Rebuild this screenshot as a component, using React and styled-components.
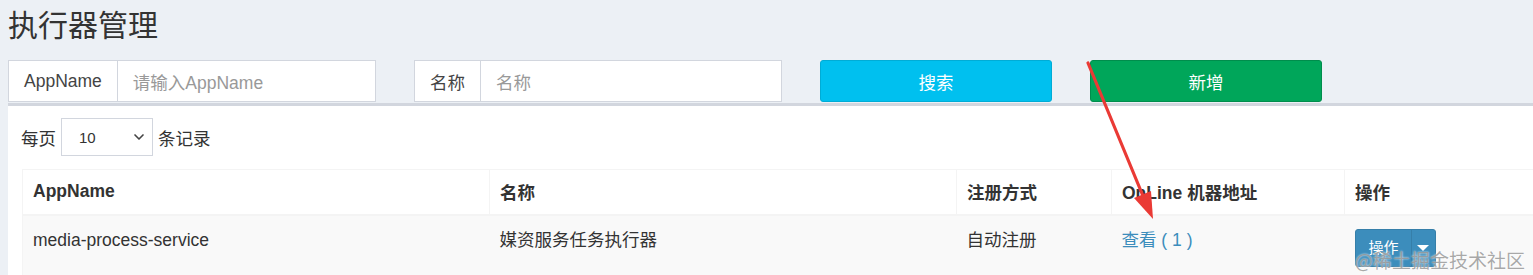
import { styled, createGlobalStyle } from "styled-components";
import { ChevronDown } from "lucide-react";

const GlobalStyle = createGlobalStyle`
  body {
    margin: 0;
    background: #ecf0f5;
    font-family: "Liberation Sans", "Noto Sans CJK SC", sans-serif;
    font-size: 17.5px;
    color: #333;
    overflow: hidden;
  }
`;

const Page = styled.div`
  position: relative;
  height: 275px;
  padding: 8px 0 0 8px;
  box-sizing: border-box;
  overflow: hidden;
`;

const Title = styled.h1`
  margin: 0;
  height: 36px;
  font-size: 30px;
  line-height: 36px;
  font-weight: 400;
  color: #333;
`;

const SearchRow = styled.div`
  display: flex;
  gap: 38px;
  margin-top: 16px;
  height: 42px;
`;

const InputGroup = styled.div`
  display: flex;
  width: 368px;
  height: 42px;
  box-sizing: border-box;
  border: 1px solid #d2d6de;
  background: #fff;
`;

const Addon = styled.div`
  display: flex;
  align-items: center;
  padding: 0 15px;
  border-right: 1px solid #d2d6de;
  color: #444;
`;

const Field = styled.div`
  display: flex;
  align-items: center;
  flex: 1;
  padding: 0 15px;
  color: #999;
`;

const Button = styled.div`
  display: flex;
  align-items: center;
  justify-content: center;
  width: 232px;
  height: 42px;
  box-sizing: border-box;
  border-radius: 3px;
  color: #fff;
  background: ${(p) => p.$bg};
  border: 1px solid ${(p) => p.$border};
`;

const Box = styled.div`
  margin-top: 1px;
  border-top: 3px solid #d2d6de;
  background: #fff;
  padding: 12px 0 0 13px;
  height: 200px;
`;

const LengthRow = styled.div`
  display: flex;
  align-items: center;
  gap: 5px;
  height: 38px;
`;

const Select = styled.div`
  display: flex;
  align-items: center;
  justify-content: space-between;
  width: 92px;
  height: 38px;
  box-sizing: border-box;
  border: 1px solid #d2d6de;
  padding: 0 5px 0 17px;
  font-size: 15px;
  color: #333;
`;

const Table = styled.table`
  margin: 13px 0 0 1px;
  border-collapse: collapse;
  table-layout: fixed;
  width: 1542px;
  border-top: 1px solid #f4f4f4;
  border-left: 1px solid #f4f4f4;
`;

const Th = styled.th`
  box-sizing: border-box;
  width: ${(p) => p.$w}px;
  height: 45px;
  padding: 0 10px;
  text-align: left;
  font-weight: 700;
  border-left: 1px solid #f4f4f4;
  border-bottom: 2px solid #f4f4f4;
  white-space: nowrap;
`;

const BodyRow = styled.tr`
  background: #f9f9f9;
`;

const Td = styled.td`
  height: 50px;
  padding: ${(p) => (p.$tight ? "13px 10px 0" : "12px 10px")};
  vertical-align: top;
  line-height: 25px;
  white-space: nowrap;
`;

const Link = styled.span`
  color: #3c8dbc;
`;

const SplitButton = styled.div`
  display: inline-flex;
  height: 36px;
  border-radius: 3px;
  background: #3c8dbc;
  border: 1px solid #367fa9;
  color: #fff;
  font-size: 15px;
  overflow: hidden;
`;

const SplitMain = styled.div`
  display: flex;
  align-items: center;
  padding: 0 12px 0 13px;
  border-right: 1px solid #367fa9;
`;

const SplitCaret = styled.div`
  display: flex;
  align-items: center;
  justify-content: center;
  width: 23px;

  &::after {
    content: "";
    border-top: 6px solid #fff;
    border-left: 6px solid transparent;
    border-right: 6px solid transparent;
  }
`;

const Arrow = styled.svg`
  position: absolute;
  left: 1080px;
  top: 55px;
  pointer-events: none;
`;

const Watermark = styled.div`
  position: absolute;
  right: 8px;
  bottom: 2px;
  font-size: 19px;
  color: rgba(140, 140, 140, 0.75);
  text-shadow: 0 0 2px #fff;
  font-family: "Noto Sans CJK SC", sans-serif;
`;

const columns = [
  { name: "AppName", w: 467 },
  { name: "名称", w: 467 },
  { name: "注册方式", w: 155 },
  { name: "OnLine 机器地址", w: 233 },
  { name: "操作", w: 220 },
];

export default function App() {
  return (
    <Page>
      <GlobalStyle />
      <Title>执行器管理</Title>
      <SearchRow>
        <InputGroup>
          <Addon>AppName</Addon>
          <Field>请输入AppName</Field>
        </InputGroup>
        <InputGroup>
          <Addon>名称</Addon>
          <Field>名称</Field>
        </InputGroup>
        <Button $bg="#00c0ef" $border="#00acd6">搜索</Button>
        <Button $bg="#00a65a" $border="#008d4c">新增</Button>
      </SearchRow>
      <Box>
        <LengthRow>
          每页
          <Select>
            10
            <ChevronDown size={16} strokeWidth={2.5} color="#444" />
          </Select>
          条记录
        </LengthRow>
        <Table>
          <thead>
            <tr>
              {columns.map((c) => (
                <Th key={c.name} $w={c.w}>
                  {c.name}
                </Th>
              ))}
            </tr>
          </thead>
          <tbody>
            <BodyRow>
              <Td>media-process-service</Td>
              <Td>媒资服务任务执行器</Td>
              <Td>自动注册</Td>
              <Td>
                <Link>查看 ( 1 )</Link>
              </Td>
              <Td $tight>
                <SplitButton>
                  <SplitMain>操作</SplitMain>
                  <SplitCaret />
                </SplitButton>
              </Td>
            </BodyRow>
          </tbody>
        </Table>
      </Box>
      <Arrow width="90" height="175" viewBox="0 0 90 175">
        <line x1="8" y1="8" x2="63" y2="141" stroke="#ea3a35" strokeWidth="3.2" strokeLinecap="round" />
        <polygon points="73,164 71,136 54,143" fill="#ea3a35" />
      </Arrow>
      <Watermark>@稀土掘金技术社区</Watermark>
    </Page>
  );
}
